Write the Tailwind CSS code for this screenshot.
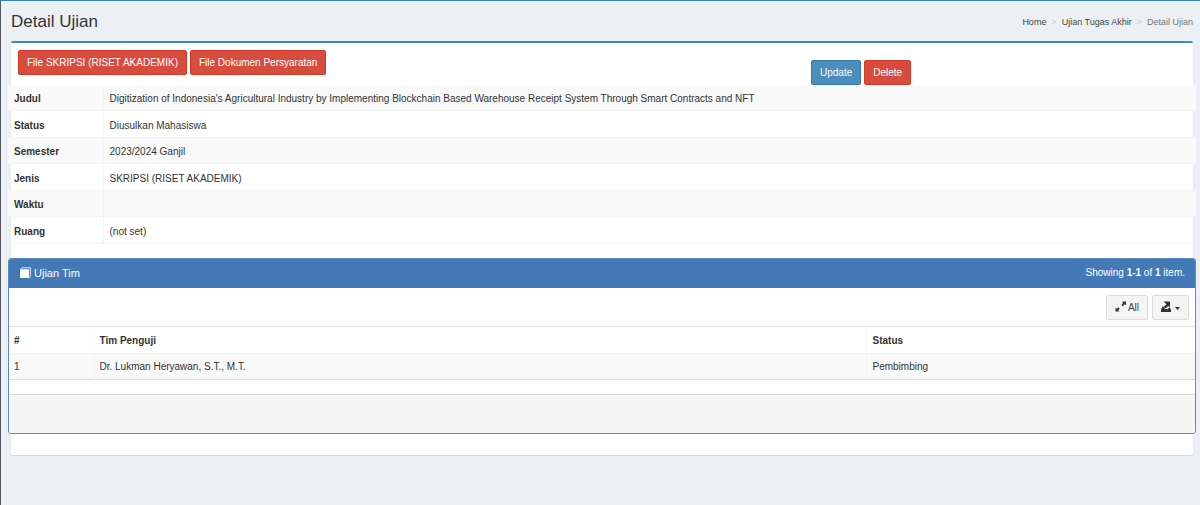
<!DOCTYPE html>
<html lang="id">
<head>
    <meta charset="UTF-8">
    <meta name="viewport" content="width=device-width, initial-scale=1">
    <script src="https://cdn.jsdelivr.net/npm/@tailwindcss/browser@4"></script>
    <title>Detail Ujian</title>
</head>
<body class="min-h-screen border-t border-l border-t-[#3580b8] border-l-[#55585f] bg-[#ecf0f5] font-['Liberation_Sans',Arial,sans-serif] text-[10px] leading-[14px] text-[#333]">
    <header class="flex h-10 items-center justify-between pr-[7px] pl-[10px]">
        <h1 class="pt-[2px] text-[17px] leading-5">Detail Ujian</h1>
        <nav aria-label="Breadcrumb">
            <ol class="flex gap-[5px] pt-[2px] text-[9px]">
                <li><a href="#" class="text-[#444]">Home</a></li>
                <li class="text-[#ccc]">&gt;</li>
                <li><a href="#" class="text-[#444]">Ujian Tugas Akhir</a></li>
                <li class="text-[#ccc]">&gt;</li>
                <li class="text-[#777]">Detail Ujian</li>
            </ol>
        </nav>
    </header>

    <main class="mr-[7px] ml-[10px] rounded-[2px] border-t-2 border-[#3c8dbc] bg-white pb-[21px] shadow-[0_1px_1px_rgba(0,0,0,0.1)]">
        <div class="flex h-[42px]">
            <div class="flex w-2/3 items-start gap-[3px] pt-[7px] pl-[7px]">
                <button type="button" class="h-[25px] rounded-xs border border-[#d73925] bg-[#d64c3f] px-2 text-white">File SKRIPSI (RISET AKADEMIK)</button>
                <button type="button" class="h-[25px] rounded-xs border border-[#d73925] bg-[#d64c3f] px-2 text-white">File Dokumen Persyaratan</button>
            </div>
            <div class="flex items-end gap-[3px] pl-3">
                <button type="button" class="h-[25px] rounded-xs border border-[#367fa9] bg-[#4b8dbd] px-2 text-white">Update</button>
                <button type="button" class="h-[25px] rounded-xs border border-[#d73925] bg-[#d64c3f] px-2 text-white">Delete</button>
            </div>
        </div>

        <!-- exam details -->
        <div class="-mx-[3px]">
            <table class="h-[159px] w-full border-collapse text-left">
                <tbody>
                    <tr class="border-b border-[#f4f4f4] bg-[#f9f9f9]">
                        <th scope="row" class="w-[8%] border-r border-[#f4f4f4] px-[6px] pt-[3px]">Judul</th>
                        <td class="px-[6px] pt-[3px]">Digitization of Indonesia's Agricultural Industry by Implementing Blockchain Based Warehouse Receipt System Through Smart Contracts and NFT</td>
                    </tr>
                    <tr class="border-b border-[#f4f4f4]">
                        <th scope="row" class="border-r border-[#f4f4f4] px-[6px] pt-[3px]">Status</th>
                        <td class="px-[6px] pt-[3px]">Diusulkan Mahasiswa</td>
                    </tr>
                    <tr class="border-b border-[#f4f4f4] bg-[#f9f9f9]">
                        <th scope="row" class="border-r border-[#f4f4f4] px-[6px] pt-[3px]">Semester</th>
                        <td class="px-[6px] pt-[3px]">2023/2024 Ganjil</td>
                    </tr>
                    <tr class="border-b border-[#f4f4f4]">
                        <th scope="row" class="border-r border-[#f4f4f4] px-[6px] pt-[3px]">Jenis</th>
                        <td class="px-[6px] pt-[3px]">SKRIPSI (RISET AKADEMIK)</td>
                    </tr>
                    <tr class="border-b border-[#f4f4f4] bg-[#f9f9f9]">
                        <th scope="row" class="border-r border-[#f4f4f4] px-[6px] pt-[3px]">Waktu</th>
                        <td class="px-[6px] pt-[3px]"></td>
                    </tr>
                    <tr class="border-b border-[#f4f4f4]">
                        <th scope="row" class="border-r border-[#f4f4f4] px-[6px] pt-[3px]">Ruang</th>
                        <td class="px-[6px] pt-[3px]">(not set)</td>
                    </tr>
                </tbody>
            </table>
        </div>

        <!-- examiner panel -->
        <section class="-mx-[3px] mt-[14px] overflow-hidden rounded-[3px] border border-[#5a8ac2] bg-white">
            <div class="flex h-[29px] items-center justify-between bg-[#4479b7] pr-[10px] pb-px pl-[11px] text-white">
                <h2 class="flex items-center gap-[3px] text-[11px]">
                    <svg class="h-3 w-[11px]" viewBox="0 0 11 12" fill="none" aria-hidden="true">
                        <path d="M0 3 1 2.200h8V11H1L0 10.500z" fill="#fff"/>
                        <path d="M.500 2.500 1.800 .800h8.700v8.500L9 11" stroke="#fff" stroke-opacity=".8"/>
                    </svg>
                    Ujian Tim
                </h2>
                <p>Showing <b>1-1</b> of <b>1</b> item.</p>
            </div>
            <div class="flex h-[38px] items-center justify-end gap-[4px] pr-[6px]">
                <button type="button" class="flex h-[25px] items-center gap-px rounded-xs border border-[#ddd] bg-[#f4f4f4] px-2 text-[#444]">
                    <svg class="h-3 w-3" viewBox="0 0 12 12" fill="#333" aria-hidden="true">
                        <path d="M7 .500h4v4L9.800 3.300 7.600 5.200 6.400 4 8.200 1.800zM.500 10.500v-4l1.200 1.200L3.500 6.200l1.200 1.200-1.500 1.800 1.300 1.300z"/>
                    </svg>
                    <span class="pt-px">All</span>
                </button>
                <button type="button" aria-label="Export" class="flex h-[25px] items-center gap-1 rounded-xs border border-[#ddd] bg-[#f4f4f4] px-2">
                    <svg class="h-3 w-[10px]" viewBox="0 0 10 12" fill="#333" aria-hidden="true">
                        <path d="M2.500 .500H9V6.500L7.300 5 4.500 7.500 2.800 5.800 5.500 3.200z"/>
                        <path d="M1.500 5.500h1L4 8h3l1-1.500h.7L10 8.500H0zM0 8.500h10V11H0z"/>
                    </svg>
                    <svg class="mt-[3px] h-[3px] w-[5px]" viewBox="0 0 5 3" fill="#333" aria-hidden="true"><path d="M0 0h5L2.500 3z"/></svg>
                </button>
            </div>
            <table class="w-full table-fixed border-collapse border-y border-[#ddd] text-left">
                <thead>
                    <tr class="h-[27px] border-b border-[#f4f4f4]">
                        <th scope="col" class="w-[85px] border-r border-[#f4f4f4] px-[5px] pt-px">#</th>
                        <th scope="col" class="border-r border-[#f4f4f4] px-[5px] pt-px">Tim Penguji</th>
                        <th scope="col" class="w-[329px] px-[6px] pt-px">Status</th>
                    </tr>
                </thead>
                <tbody>
                    <tr class="h-[26px] bg-[#f9f9f9]">
                        <td class="border-r border-[#f4f4f4] px-[5px] pt-px">1</td>
                        <td class="border-r border-[#f4f4f4] px-[5px] pt-px">Dr. Lukman Heryawan, S.T., M.T.</td>
                        <td class="px-[6px] pt-px">Pembimbing</td>
                    </tr>
                </tbody>
            </table>
            <div class="mt-[14px] h-[39px] border-t border-[#ddd] bg-[#f5f5f5]"></div>
        </section>
    </main>
</body>
</html>
